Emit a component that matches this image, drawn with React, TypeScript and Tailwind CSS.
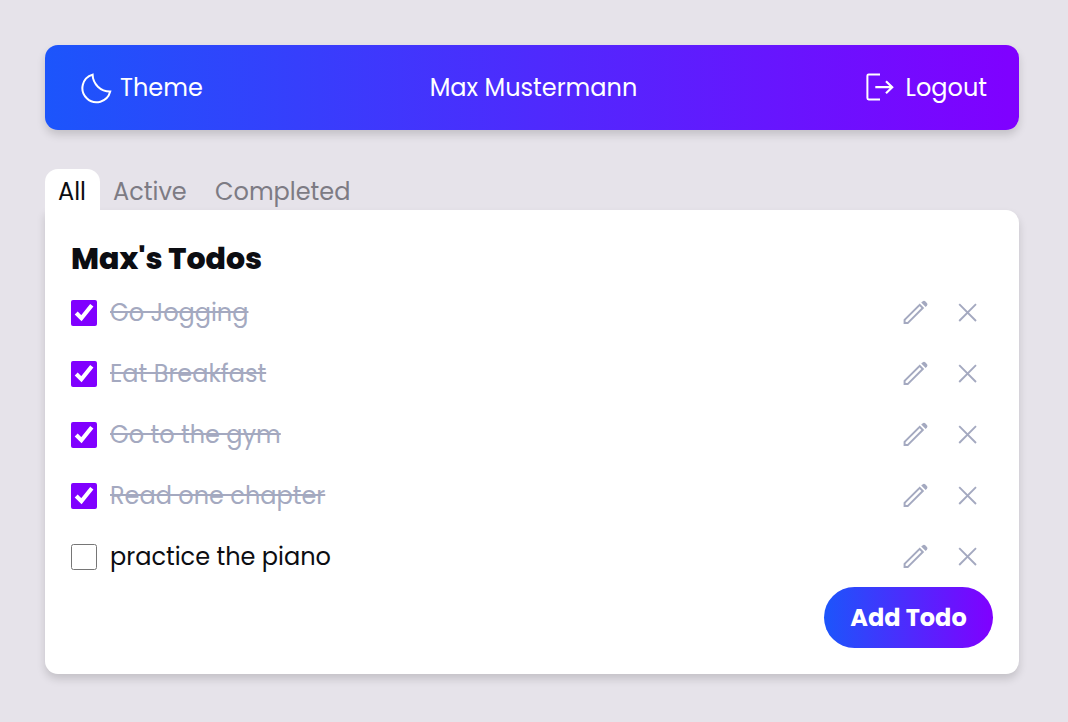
import { useState } from "react";

type Todo = { id: number; text: string; done: boolean };

const initialTodos: Todo[] = [
  { id: 1, text: "Go Jogging", done: true },
  { id: 2, text: "Eat Breakfast", done: true },
  { id: 3, text: "Go to the gym", done: true },
  { id: 4, text: "Read one chapter", done: true },
  { id: 5, text: "practice the piano", done: false },
];

function MoonIcon() {
  return (
    <svg aria-hidden="true" className="size-8" viewBox="0 0 32 32" fill="none" stroke="currentColor" strokeWidth="2">
      <path d="M12.6 2.6A14.1 14.1 0 1 0 30.2 19.6A17.4 17.4 0 0 1 12.6 2.6Z" />
    </svg>
  );
}

function LogoutIcon() {
  return (
    <svg aria-hidden="true" className="size-8" viewBox="0 0 32 32" fill="none" stroke="currentColor" strokeWidth="2">
      <path d="M16 2.4H4.7Q3.4 2.4 3.4 3.7V26.1Q3.4 27.4 4.7 27.4H16" />
      <path d="M11.3 15.2H28.4M22 9.2L28.2 15.2L22 21.2" strokeWidth="2.2" />
    </svg>
  );
}

function PencilIcon() {
  return (
    <svg aria-hidden="true" className="size-7" viewBox="0 0 28 28" fill="none" stroke="currentColor" strokeWidth="2">
      <path d="M2.6 24.1V20.9L17.7 5.9L20.8 9L5.7 24.1Z" />
      <path d="M19.2 3.5L20.5 2.4Q22 1.2 23.4 2.4L24.9 3.9Q26 5.2 25 6.6L23.7 7.9Z" fill="currentColor" stroke="none" />
    </svg>
  );
}

function CloseIcon() {
  return (
    <svg aria-hidden="true" className="size-7" viewBox="0 0 28 28" fill="none" stroke="currentColor" strokeWidth="1.9">
      <path d="M5.2 5.2L22 22M22 5.2L5.2 22" />
    </svg>
  );
}

const tabs = [
  { name: "All", width: "min-w-[55px]" },
  { name: "Active", width: "min-w-[102px]" },
  { name: "Completed", width: "min-w-[163px]" },
];

export default function App() {
  const [tab, setTab] = useState("All");
  const [todos, setTodos] = useState(initialTodos);
  const shown = todos.filter((t) => tab === "All" || t.done === (tab === "Completed"));
  const toggle = (id: number) =>
    setTodos(todos.map((t) => (t.id === id ? { ...t, done: !t.done } : t)));

  return (
    <div className="min-h-screen bg-[#e6e3ea] pt-[45px] pr-[49px] pb-12 pl-[45px] font-[Poppins,Inter,sans-serif] text-[24px] leading-[38px] text-[#0c0d12]">
      <header className="grid h-[85px] grid-cols-[1fr_auto_1fr] items-center rounded-[13px] bg-[linear-gradient(90deg,#1c55fb,#8000ff)] pr-8 pl-[35px] text-white shadow-[0_5px_8px_rgba(0,0,0,0.15)]">
        <button type="button" className="flex items-center gap-2 justify-self-start">
          <MoonIcon />
          Theme
        </button>
        <span>Max Mustermann</span>
        <button type="button" className="flex items-center gap-2.5 justify-self-end">
          <LogoutIcon />
          Logout
        </button>
      </header>

      <main className="mt-[39px]">
        <nav className="flex" aria-label="Filter">
          {tabs.map(({ name, width }) => (
            <button
              key={name}
              type="button"
              aria-pressed={tab === name}
              onClick={() => setTab(name)}
              className={`${width} h-[41px] rounded-t-[13px] px-[13px] pt-1 text-left ${
                tab === name ? "bg-white" : "text-[#7d7b84]"
              }`}
            >
              {name}
            </button>
          ))}
        </nav>
        <section className="rounded-[13px] rounded-tl-none bg-white p-[26px] shadow-[0_5px_8px_rgba(0,0,0,0.15)]">
          <h1 className="h-[46px] text-[30px] leading-[46px] font-extrabold">Max's Todos</h1>
          <ul>
            {shown.map((t) => (
              <li key={t.id} className="flex h-[61px] items-center">
                <label className="flex flex-1 items-center gap-[13px]">
                  <input
                    type="checkbox"
                    checked={t.done}
                    onChange={() => toggle(t.id)}
                    className="size-[26px] accent-[#8000ff]"
                  />
                  <span className={t.done ? "text-[#a4a9c0] line-through" : ""}>{t.text}</span>
                </label>
                <div className="flex gap-6 pr-[11px] text-[#a4a9c0]">
                  <button type="button" aria-label={`Edit ${t.text}`}>
                    <PencilIcon />
                  </button>
                  <button type="button" aria-label={`Delete ${t.text}`}>
                    <CloseIcon />
                  </button>
                </div>
              </li>
            ))}
          </ul>
          <div className="flex justify-end">
            <button
              type="button"
              className="h-[61px] min-w-[169px] rounded-full bg-[linear-gradient(90deg,#1c55fb,#8000ff)] px-5 font-bold text-white"
            >
              Add Todo
            </button>
          </div>
        </section>
      </main>
    </div>
  );
}
